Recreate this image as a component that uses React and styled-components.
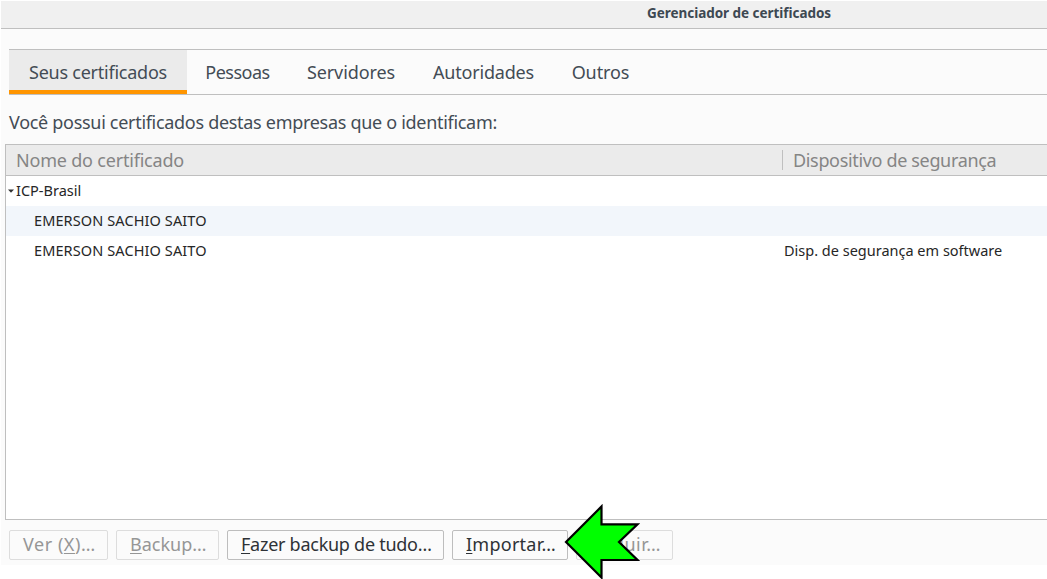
import React from "react";
import styled, { createGlobalStyle } from "styled-components";

const GlobalStyle = createGlobalStyle`
  * { box-sizing: border-box; }
  body {
    margin: 0;
    background: #fff;
    overflow: hidden;
    font-family: "Noto Sans", "Open Sans", sans-serif;
    font-size: 18px;
    color: #434c55;
  }
`;

const Page = styled.div`
  width: 1047px;
  height: 579px;
  padding: 1px 0 0 1px;
  overflow: hidden;
  position: relative;
`;

const Window = styled.main`
  display: flex;
  flex-direction: column;
  height: 564px;
  background: #fbfbfb;
`;

const TitleBar = styled.header`
  flex: none;
  height: 28px;
  padding-left: 646px;
  background: #f0f0f0;
  border-bottom: 1px solid #bfbfbf;
  font-size: 13.5px;
  font-weight: 700;
  line-height: 24px;
  color: #3d4852;
`;

const TabBar = styled.nav`
  flex: none;
  display: flex;
  height: 46px;
  margin: 20px 0 0 8px;
  border-top: 1px solid #bfbfbf;
  border-bottom: 1px solid #bfbfbf;
`;

const Tab = styled.div`
  width: ${(p) => p.$width}px;
  display: flex;
  justify-content: center;
  line-height: 44px;
  background: ${(p) => (p.$active ? "#ebebeb" : "transparent")};
  box-shadow: ${(p) => (p.$active ? "inset 0 -4px 0 #ff9500" : "none")};
`;

const Label = styled.span`
  white-space: nowrap;
  letter-spacing: ${(p) => p.$spacing || 0}px;
`;

const Intro = styled.p`
  flex: none;
  margin: 0;
  height: 49px;
  padding: 15px 0 0 8px;
  line-height: 25px;
`;

const Tree = styled.section`
  flex: 1;
  margin-left: 4px;
  background: #fff;
  border: 1px solid #bfbfbf;
  border-right: 0;
`;

const TreeHeader = styled.div`
  display: grid;
  grid-template-columns: 776px 1fr;
  align-items: center;
  height: 31px;
  background: #ebebeb;
  border-bottom: 1px solid #bfbfbf;
  color: #858585;
`;

const HeaderCell = styled.div`
  height: 20px;
  line-height: 20px;
  padding-left: 10px;
  border-left: ${(p) => (p.$divided ? "1px solid #bfbfbf" : "0")};
`;

const TreeRow = styled.div`
  display: grid;
  grid-template-columns: 778px 1fr;
  height: 30px;
  line-height: 28px;
  font-size: 14.5px;
  color: #262626;
  background: ${(p) => (p.$striped ? "#f2f6fb" : "#fff")};
`;

const NameCell = styled.div`
  display: flex;
  padding-left: ${(p) => p.$indent}px;
`;

const Twisty = styled.svg`
  width: 6px;
  height: 4px;
  margin: 13px 2px 0 0;
`;

const Actions = styled.footer`
  flex: none;
  display: flex;
  gap: 8px;
  height: 45px;
  padding: 10px 0 5px 8px;
`;

const Button = styled.button`
  width: ${(p) => p.$width}px;
  height: 30px;
  padding: 0 0 2px 13px;
  text-align: left;
  font: inherit;
  line-height: 26px;
  color: ${(p) => (p.disabled ? "#969696" : "#2e3236")};
  background: #fbfbfb;
  border: 1px solid ${(p) => (p.disabled ? "#dddddd" : "#bdbdbd")};
  border-radius: 2px;
`;

const AccessKey = styled.span`
  text-decoration: underline;
  text-decoration-thickness: 1px;
  text-underline-offset: 2px;
  text-decoration-skip-ink: none;
`;

const Pointer = styled.svg`
  position: absolute;
  left: 562px;
  top: 502px;
  width: 80px;
  height: 77px;
`;

const tabs = [
  { text: "Seus certificados", width: 178, spacing: -0.24, active: true },
  { text: "Pessoas", width: 101, spacing: -0.5 },
  { text: "Servidores", width: 126, spacing: -0.1 },
  { text: "Autoridades", width: 139, spacing: -0.2 },
  { text: "Outros", width: 95, spacing: -0.1 },
];

const actions = [
  { before: "Ver (", key: "X", after: ")…", width: 99, spacing: 0.55, disabled: true },
  { before: "", key: "B", after: "ackup…", width: 103, spacing: 0, disabled: true },
  { before: "", key: "F", after: "azer backup de tudo…", width: 217, spacing: -0.26 },
  { before: "", key: "I", after: "mportar…", width: 116, spacing: 0.25 },
  { before: "", key: "E", after: "xcluir…", width: 97, spacing: 0.5, disabled: true },
];

export default function App() {
  return (
    <Page>
      <GlobalStyle />
      <Window>
        <TitleBar>
          <Label $spacing={-0.04}>Gerenciador de certificados</Label>
        </TitleBar>
        <TabBar>
          {tabs.map((t) => (
            <Tab key={t.text} $width={t.width} $active={t.active}>
              <Label $spacing={t.spacing}>{t.text}</Label>
            </Tab>
          ))}
        </TabBar>
        <Intro>
          <Label $spacing={-0.3}>
            Você possui certificados destas empresas que o identificam:
          </Label>
        </Intro>
        <Tree>
          <TreeHeader>
            <HeaderCell>
              <Label $spacing={-0.2}>Nome do certificado</Label>
            </HeaderCell>
            <HeaderCell $divided>
              <Label $spacing={-0.34}>Dispositivo de segurança</Label>
            </HeaderCell>
          </TreeHeader>
          <TreeRow>
            <NameCell $indent={2}>
              <Twisty viewBox="0 0 6 4">
                <path d="M0 0.5H6L3 3.8Z" fill="#333" />
              </Twisty>
              <Label $spacing={0}>ICP-Brasil</Label>
            </NameCell>
          </TreeRow>
          <TreeRow $striped>
            <NameCell $indent={28}>
              <Label $spacing={0.11}>EMERSON SACHIO SAITO</Label>
            </NameCell>
          </TreeRow>
          <TreeRow>
            <NameCell $indent={28}>
              <Label $spacing={0.11}>EMERSON SACHIO SAITO</Label>
            </NameCell>
            <Label $spacing={0}>Disp. de segurança em software</Label>
          </TreeRow>
        </Tree>
        <Actions>
          {actions.map((a) => (
            <Button key={a.key} $width={a.width} disabled={a.disabled}>
              <Label $spacing={a.spacing}>
                {a.before}
                <AccessKey>{a.key}</AccessKey>
                {a.after}
              </Label>
            </Button>
          ))}
        </Actions>
      </Window>
      <Pointer viewBox="562 502 80 77">
        <path
          d="M566 542L601.5 506.5V524.3H637.5L619 542L637.5 560H601.5V577.5Z"
          fill="#00ff00"
          stroke="#000"
          strokeWidth="2.2"
        />
      </Pointer>
    </Page>
  );
}
